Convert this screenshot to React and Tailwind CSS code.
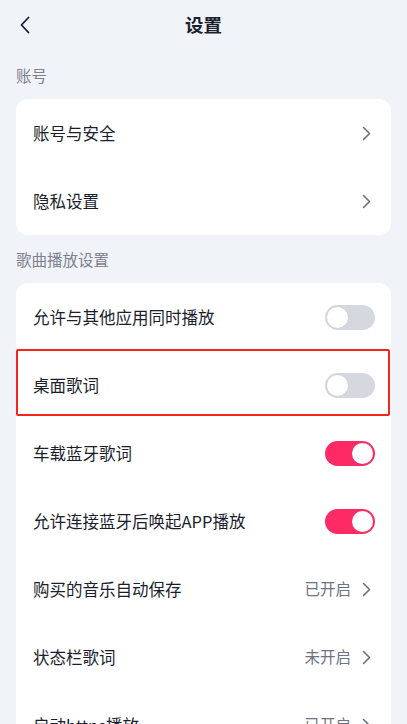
import { useState } from 'react';

const FONT = { fontFamily: '"Noto Sans CJK SC", "Noto Sans", sans-serif' };

const Chevron = () => (
  <svg width="9" height="15" viewBox="0 0 9 15" fill="none" className="shrink-0">
    <path d="M1.5 1.5l6 6-6 6" stroke="#6b6f80" strokeWidth="1.6" strokeLinecap="round" strokeLinejoin="round" />
  </svg>
);

const Toggle = ({ on, onClick }) => (
  <button
    onClick={onClick}
    className={`relative w-[50px] h-[25px] mr-[-4px] rounded-full shrink-0 ${on ? 'bg-[#fe2a66]' : 'bg-[#d6d8e0]'}`}
  >
    <span
      className={`absolute top-[2px] w-[21px] h-[21px] rounded-full bg-white ${on ? 'right-[2px]' : 'left-[2px] shadow-[0_0_0_1px_#d0d3dc]'}`}
    />
  </button>
);

const Row = ({ label, children, highlight }) => (
  <div className="relative h-[68px] flex items-center justify-between pl-[17px] pr-[20px]">
    <span className="text-[16.5px] text-[#1b1e2e]">{label}</span>
    <div className="flex items-center gap-[11px]">{children}</div>
    {highlight && (
      <div className="absolute left-0 right-[1px] top-[-2px] bottom-[3px] border-2 border-[#f5241c] rounded-[2px] pointer-events-none" />
    )}
  </div>
);

const SectionLabel = ({ children }) => (
  <div className="pt-[13px] pb-[13px] pl-[16px] text-[15.5px] leading-[22px] text-[#7d8090]">{children}</div>
);

export default function App() {
  const [toggles, setToggles] = useState({ mix: false, desk: false, car: true, bt: true });
  const flip = (k) => setToggles({ ...toggles, [k]: !toggles[k] });

  return (
    <div className="w-[407px] h-[724px] overflow-hidden bg-[#f0f3f7]" style={FONT}>
      <div className="relative h-[50px] flex items-center justify-center">
        <svg width="12" height="18" viewBox="0 0 12 18" fill="none" className="absolute left-[19px] top-[16px]">
          <path d="M9.5 1.5L2.5 9l7 7.5" stroke="#1b1e2e" strokeWidth="1.8" strokeLinecap="round" strokeLinejoin="round" />
        </svg>
        <span className="text-[18.5px] font-bold text-[#1b1e2e]">设置</span>
      </div>

      <div className="pt-[1px]">
        <SectionLabel>账号</SectionLabel>
      </div>
      <div className="mx-[16px] bg-white rounded-[12px]">
        <Row label="账号与安全"><Chevron /></Row>
        <Row label="隐私设置"><Chevron /></Row>
      </div>

      <SectionLabel>歌曲播放设置</SectionLabel>
      <div className="mx-[16px] bg-white rounded-[12px]">
        <Row label="允许与其他应用同时播放">
          <Toggle on={toggles.mix} onClick={() => flip('mix')} />
        </Row>
        <Row label="桌面歌词" highlight>
          <Toggle on={toggles.desk} onClick={() => flip('desk')} />
        </Row>
        <Row label="车载蓝牙歌词">
          <Toggle on={toggles.car} onClick={() => flip('car')} />
        </Row>
        <Row label="允许连接蓝牙后唤起APP播放">
          <Toggle on={toggles.bt} onClick={() => flip('bt')} />
        </Row>
        <Row label="购买的音乐自动保存">
          <span className="text-[15.5px] text-[#6f7282]">已开启</span>
          <Chevron />
        </Row>
        <Row label="状态栏歌词">
          <span className="text-[15.5px] text-[#6f7282]">未开启</span>
          <Chevron />
        </Row>
        <Row label="启动https播放">
          <span className="text-[15.5px] text-[#6f7282]">已开启</span>
          <Chevron />
        </Row>
      </div>
    </div>
  );
}
